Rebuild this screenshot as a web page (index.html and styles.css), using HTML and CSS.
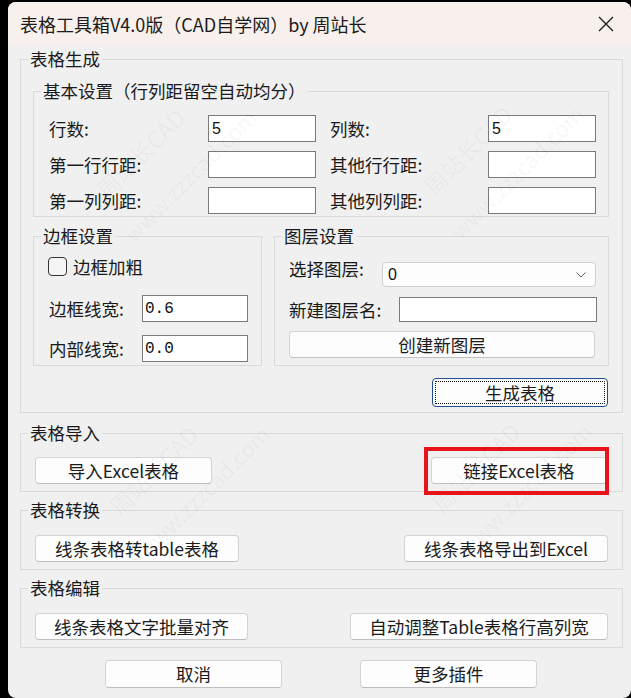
FILE: index.html
```html
<!DOCTYPE html>
<html lang="zh-CN">
<head>
<meta charset="utf-8">
<title>表格工具箱</title>
<link rel="stylesheet" href="styles.css">
</head>
<body>
<div class="window">
  <header class="titlebar">
    <span class="title">表格工具箱V4.0版（CAD自学网）by 周站长</span>
    <svg class="close" width="16" height="16" viewBox="0 0 16 16"><path d="M1 1L15 15M15 1L1 15" stroke="#1a1a1a" stroke-width="1.3" fill="none"/></svg>
  </header>
  <main class="content">
    <fieldset class="group group-gen">
      <legend>表格生成</legend>
      <div class="gbody">
        <fieldset class="group group-basic">
          <legend>基本设置（行列距留空自动均分）</legend>
          <div class="gbody basic-grid">
            <label class="lbl">行数:</label><input class="field w108" type="text" value="5">
            <label class="lbl c3">列数:</label><input class="field w108" type="text" value="5">
            <label class="lbl">第一行行距:</label><input class="field w108" type="text" value="">
            <label class="lbl c3">其他行行距:</label><input class="field w108" type="text" value="">
            <label class="lbl">第一列列距:</label><input class="field w108" type="text" value="">
            <label class="lbl c3">其他列列距:</label><input class="field w108" type="text" value="">
          </div>
        </fieldset>
        <div class="split">
          <fieldset class="group group-border">
            <legend>边框设置</legend>
            <div class="gbody">
              <div class="check"><span class="box"></span><span class="lbl">边框加粗</span></div>
              <div class="row row-w1"><label class="lbl lw94">边框线宽:</label><input class="field mono w106" type="text" value="0.6"></div>
              <div class="row row-w2"><label class="lbl lw94">内部线宽:</label><input class="field mono w106" type="text" value="0.0"></div>
            </div>
          </fieldset>
          <fieldset class="group group-layer">
            <legend>图层设置</legend>
            <div class="gbody">
              <div class="row row-select"><label class="lbl lw93 up">选择图层:</label>
                <div class="select"><span>0</span><svg width="10" height="6" viewBox="0 0 10 6"><path d="M0.5 0.5L5 5L9.5 0.5" stroke="#606060" stroke-width="1" fill="none"/></svg></div>
              </div>
              <div class="row row-name"><label class="lbl lw110">新建图层名:</label><input class="field w198 h25" type="text" value=""></div>
              <button class="btn w306">创建新图层</button>
            </div>
          </fieldset>
        </div>
        <div class="actions"><button class="btn btn-default">生成表格</button></div>
      </div>
    </fieldset>

    <fieldset class="group group-import">
      <legend>表格导入</legend>
      <div class="gbody btn-row">
        <button class="btn w177">导入Excel表格</button>
        <div class="marked"><button class="btn w176">链接Excel表格</button><span class="mark"></span></div>
      </div>
    </fieldset>

    <fieldset class="group group-convert">
      <legend>表格转换</legend>
      <div class="gbody btn-row">
        <button class="btn w204">线条表格转table表格</button>
        <button class="btn w204">线条表格导出到Excel</button>
      </div>
    </fieldset>

    <fieldset class="group group-edit">
      <legend>表格编辑</legend>
      <div class="gbody btn-row">
        <button class="btn w213">线条表格文字批量对齐</button>
        <button class="btn w258">自动调整Table表格行高列宽</button>
      </div>
    </fieldset>

    <div class="footer">
      <button class="btn w177 h28">取消</button>
      <button class="btn w177 h28">更多插件</button>
    </div>
  </main>

  <div class="watermark" aria-hidden="true">
    <div class="stamp s1"><div>周站长CAD</div><div class="l2">www.zzzcad.com</div></div>
    <div class="stamp s2"><div>周站长CAD</div><div class="l2">www.zzzcad.com</div></div>
    <div class="stamp s3"><div>周站长CAD</div><div class="l2">www.zzzcad.com</div></div>
    <div class="stamp s4"><div>周站长CAD</div><div class="l2">www.zzzcad.com</div></div>
  </div>
</div>
</body>
</html>
```
FILE: styles.css
```css
* { box-sizing: border-box; }
html, body { margin: 0; padding: 0; }
body {
  background: #000;
  width: 631px;
  height: 698px;
  overflow: hidden;
  font-family: "Noto Sans CJK SC", sans-serif;
  color: #1a1a1a;
}
.window {
  position: relative;
  margin: 2px 0 0 8px;
  width: 623px;
  height: 696px;
  border-radius: 8px;
  overflow: hidden;
  background: #f0f0f0;
}
.titlebar {
  height: 43px;
  background: #f7f0ec;
  display: flex;
  align-items: center;
  justify-content: space-between;
  padding: 0 17px 0 12px;
}
.title { font-size: 18px; line-height: 24px; color: #1b1b1b; }
.close { display: block; }

.content { padding: 4px 8px 0 12px; }

fieldset.group {
  margin: 0;
  border: 1px solid #dadada;
  padding: 0;
  min-width: 0;
}
legend {
  margin-left: 7px;
  padding: 0 2px;
  font-size: 17.5px;
  line-height: 20px;
  color: #1a1a1a;
}
.lbl { font-size: 17.5px; line-height: 20px; color: #1a1a1a; white-space: nowrap; }

.group-gen > .gbody { padding: 12px 13px 5px 12px; }
.group-basic > .gbody { padding: 14px 12px 2px 15px; }
.basic-grid {
  display: grid;
  grid-template-columns: 159px 108px 172px 108px;
  grid-auto-rows: 27px;
  row-gap: 9px;
  align-items: center;
}
.c3 { padding-left: 14px; }

.field {
  height: 27px;
  border: 1px solid #7a7a7a;
  background: #fff;
  padding: 0 3px;
  font-family: "Liberation Sans", sans-serif;
  font-size: 16px;
  color: #111;
  outline: none;
  border-radius: 0;
  margin: 0;
}
.field.mono { font-family: "Liberation Mono", monospace; font-size: 16px; padding-left: 2px; }
.w108 { width: 108px; }
.w106 { width: 106px; }
.w198 { width: 198px; }
.h25 { height: 25px; }

.split { display: flex; gap: 12px; margin-top: 9px; }
.group-border { width: 229px; }
.group-border > .gbody { padding: 11px 10px 3px 14px; }
.group-layer { flex: 1; }
.group-layer > .gbody { padding: 16px 11px 6px 14px; }

.check { display: flex; align-items: center; gap: 6px; height: 19px; }
.box {
  width: 19px; height: 19px;
  border: 1.5px solid #333;
  border-radius: 4px;
  background: #f5f5f5;
}
.row { display: flex; align-items: center; }
.row-w1 { margin-top: 19px; }
.row-w2 { margin-top: 13px; }
.lw94 { width: 94px; padding-left: 1px; }
.lw93 { width: 93px; }
.lw110 { width: 110px; }
.row-select { align-items: flex-start; height: 25px; }
.up { margin-top: -3px; }
.row-name { margin-top: 10px; }
.select {
  width: 214px;
  height: 25px;
  border: 1px solid #d0d0d0;
  border-radius: 4px;
  background: #fdfdfd;
  display: flex;
  align-items: center;
  justify-content: space-between;
  padding: 0 9px 0 5px;
  font-family: "Liberation Sans", sans-serif;
  font-size: 16px;
  color: #111;
}

.btn {
  font-family: "Noto Sans CJK SC", sans-serif;
  font-size: 17.5px;
  line-height: 20px;
  background: #fdfdfd;
  border: 1px solid #d3d3d3;
  border-bottom-color: #bfbfbf;
  border-radius: 4px;
  padding: 0;
  margin: 0;
  color: #1a1a1a;
  height: 27px;
  white-space: nowrap;
}
.w306 { width: 306px; margin-top: 9px; display: block; }
.w176 { width: 176px; }
.w177 { width: 177px; }
.w204 { width: 204px; }
.w213 { width: 213px; }
.w258 { width: 258px; }
.h28 { height: 28px; }

.actions { display: flex; justify-content: flex-end; margin-top: 12px; }
.btn-default {
  width: 176px;
  height: 29px;
  margin-right: 1px;
  border: 1px solid #1f4f8f;
  outline: 1px dotted #111;
  outline-offset: -4px;
}

.group-import { margin-top: 10px !important; }
.group-import > .gbody { padding: 14px 15px 7px 14px; }
.group-convert, .group-edit { margin-top: 8px !important; }
.group-convert > .gbody, .group-edit > .gbody { padding: 15px 14px 7px 14px; }
.btn-row { display: flex; justify-content: space-between; align-items: flex-start; }

.marked { position: relative; }
.marked .btn { display: block; }
.mark {
  position: absolute;
  left: -7px; right: -2px; top: -10px; bottom: -11px;
  border: 4px solid #e8141b;
}

.footer { display: flex; gap: 78px; margin: 12px 0 0 85px; }

.watermark {
  position: absolute;
  inset: 0;
  pointer-events: none;
  overflow: hidden;
}
.stamp {
  position: absolute;
  transform-origin: 0 0;
  transform: rotate(-45deg);
  font-family: "Noto Sans CJK SC", sans-serif;
  font-size: 23px;
  line-height: 20px;
  color: rgba(0, 0, 0, 0.045);
  white-space: nowrap;
}
.stamp .l2 { margin: 30px 0 0 -12px; font-size: 22px; }
.s1 { left: 85px; top: 184px; }
.s2 { left: 412px; top: 181px; }
.s3 { left: 98px; top: 501px; }
.s4 { left: 420px; top: 498px; }
```
